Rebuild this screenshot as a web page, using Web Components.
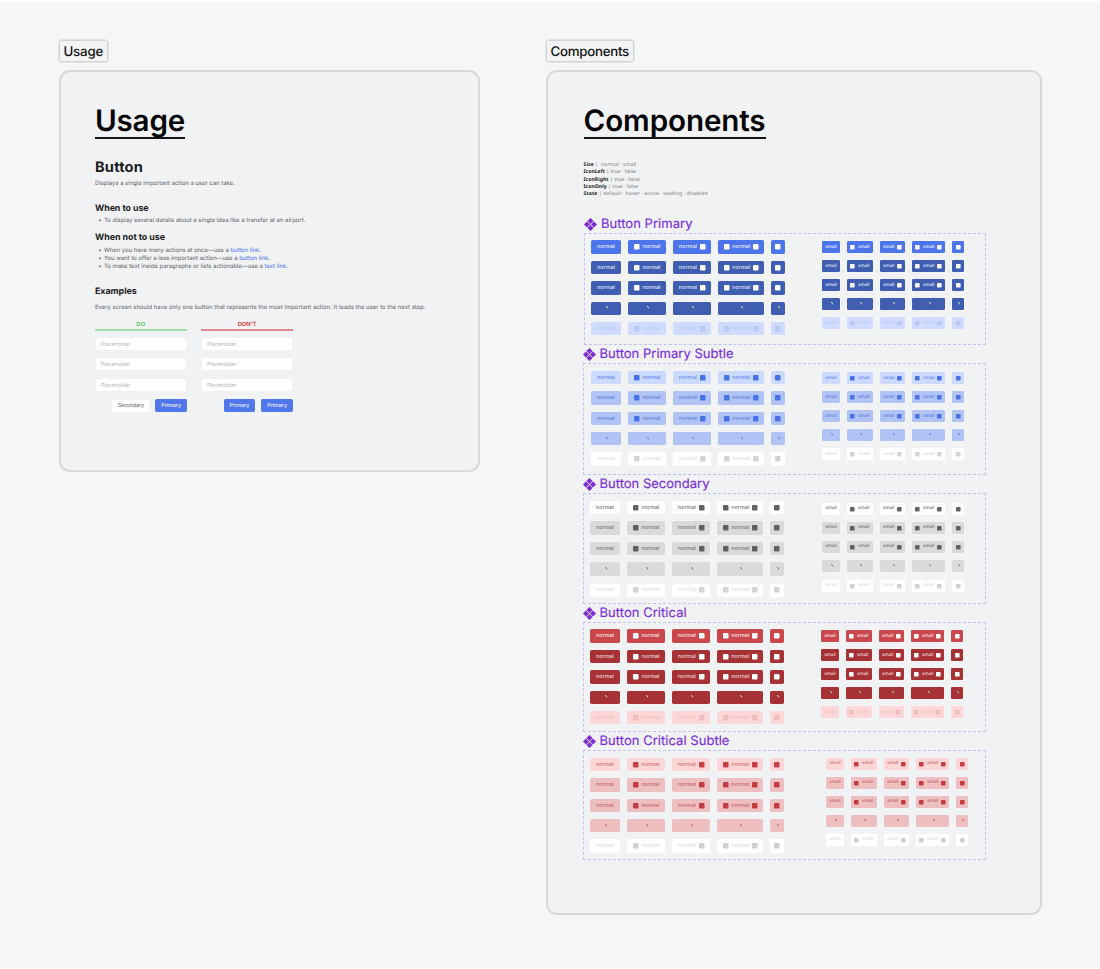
<!DOCTYPE html>
<html lang="en">
<head>
<meta charset="utf-8">
<title>Button – Usage and Components</title>
<style>
html,body{margin:0;height:100%}
body{font-family:Inter,"Liberation Sans",sans-serif;background:#f4f6f8;color:#111;text-rendering:geometricPrecision;font-optical-sizing:none;font-variation-settings:"opsz" 14}
</style>
</head>
<body>
<design-board></design-board>
<script>
// Text set to an exact width by spreading the difference over its letters.
class FitText extends HTMLElement{
  connectedCallback(){
    if(!this.shadowRoot)this.attachShadow({mode:'open'}).innerHTML='<style>:host{display:inline-block;white-space:pre}</style><slot></slot>';
    const w=parseFloat(this.getAttribute('w')),n=this.textContent.length;
    this.style.letterSpacing='0px';
    this.style.letterSpacing=((w-this.getBoundingClientRect().width)/n).toFixed(4)+'px';
  }
}

class BoardPanel extends HTMLElement{
  connectedCallback(){
    this.attachShadow({mode:'open'}).innerHTML=`<style>
    :host{display:block}
    .tag{box-sizing:border-box;display:inline-flex;align-items:center;height:22px;padding:2.5px 3.5px 0;border:1px solid #d0d2d5;outline:.5px solid #e3e4e7;border-radius:2.5px;background:#f1f3f5;font-size:13.3px;font-weight:500;line-height:20px;vertical-align:top}
    .box{box-sizing:border-box;margin-top:8px;height:var(--h);border:2px solid #d6d8db;border-radius:11px;background:#f1f2f4;padding:32px 0 0 var(--pl,34px)}
    h1{width:fit-content;margin:0;font-size:29.6px;font-weight:600;line-height:35px;height:33px;border-bottom:2px solid #151515;color:#050505}
    </style>
    <div class="tag"><fit-text w="${this.getAttribute('tw')}">${this.getAttribute('name')}</fit-text></div>
    <div class="box"><h1><fit-text w="${this.getAttribute('hw')}">${this.getAttribute('name')}</fit-text></h1><slot></slot></div>`;
  }
}

class ExampleForm extends HTMLElement{
  connectedCallback(){
    const bad=this.hasAttribute('bad');
    this.attachShadow({mode:'open'}).innerHTML=`<style>
    :host{display:block;width:92px}
    .h{height:8px;line-height:11px;font-size:5.8px;font-weight:700;text-align:center;color:${bad?'#d14a50':'#5fc76c'}}
    .l{height:2px;margin-top:1.5px;background:${bad?'#e08a8f':'#a3dfaa'}}
    .f{box-sizing:border-box;display:flex;align-items:center;height:12px;margin:0 1px 8.5px 1px;padding:1.6px 0 0 5px;background:#fff;border-radius:1.5px;font-size:5.5px;color:#b5b8bd;box-shadow:0 0 1px #e3e5e9}
    .fs{padding-top:7px}
    .b{display:flex;justify-content:flex-end;align-items:center;gap:6px;font-size:5.4px;font-weight:500}
    .b span{box-sizing:border-box;padding-top:1px;display:flex;align-items:center;justify-content:center;width:31.7px;height:13px;border-radius:1.7px;background:#4f76ea;color:#e9eefd}
    .b .s{width:37px;height:11.5px;background:#fff;color:#777}
    </style>
    <div class="h"><fit-text w="${bad?18.7:9.5}">${bad?"DON'T":'DO'}</fit-text></div><div class="l"></div>
    <div class="fs">${'<div class="f"><fit-text w="29.3">Placeholder</fit-text></div>'.repeat(3)}</div>
    <div class="b"><span class="${bad?'':'s'}"><fit-text w="${bad?19.8:26.3}">${bad?'Primary':'Secondary'}</fit-text></span><span><fit-text w="19.8">Primary</fit-text></span></div>`;
  }
}

class UsageDoc extends HTMLElement{
  connectedCallback(){
    this.attachShadow({mode:'open'}).innerHTML=`<style>
    :host{display:block}
    h2,h3,p,ul{margin:0;padding:0;list-style:none}
    h2{font-size:14.6px;line-height:18px;height:18px;margin-top:19px;font-weight:700;color:#1b1c1e}
    h3{font-size:8.9px;line-height:12.8px;height:11px;font-weight:700;color:#1b1c1e}
    p,li{font-size:5.9px;line-height:10.2px;height:8px;color:#5d6065}
    li{display:flex}
    li::before{content:"•";width:5.8px;padding-left:3.2px}
    a{color:#4470ee}
    .c{display:flex;gap:14px;margin-top:8.7px}
    </style>
    <h2><fit-text w="48">Button</fit-text></h2>
    <p style="margin-top:2.5px"><fit-text w="139.7">Displays a single important action a user can take.</fit-text></p>
    <h3 style="margin-top:16.8px"><fit-text w="53.6">When to use</fit-text></h3>
    <ul style="margin-top:2.2px"><li><fit-text w="201.3">To display several details about a single idea like a transfer at an airport.</fit-text></li></ul>
    <h3 style="margin-top:7.8px"><fit-text w="70">When not to use</fit-text></h3>
    <ul style="margin-top:2.6px">
      <li><fit-text w="157">When you have many actions at once—use a <a>button link</a>.</fit-text></li>
      <li><fit-text w="166">You want to offer a less important action—use a <a>button link</a>.</fit-text></li>
      <li><fit-text w="184">To make text inside paragraphs or lists actionable—use a <a>text link</a>.</fit-text></li>
    </ul>
    <h3 style="margin-top:16.4px"><fit-text w="41.7">Examples</fit-text></h3>
    <p style="margin-top:5.5px"><fit-text w="330.5">Every screen should have only one button that represents the most important action. It leads the user to the next step.</fit-text></p>
    <div class="c"><example-form></example-form><example-form bad></example-form></div>`;
  }
}

class PropList extends HTMLElement{
  connectedCallback(){
    const rows=[['Size','  normal · small',52.8],['IconLeft',' true · false',52.5],['IconRight',' true · false',56.3],['IconOnly',' true · false',54.5],['State',' default · hover · active · loading · disabled',124.3]];
    this.attachShadow({mode:'open'}).innerHTML=`<style>
    :host{display:block;margin-top:23.1px;height:34.9px;font-family:"Noto Sans","Open Sans",sans-serif}
    div{font-size:5.1px;line-height:7.3px;height:7.3px;color:#777}
    b{color:#222}
    </style>`+rows.map(([a,b,w])=>`<div><fit-text w="${w}"><b>${a}</b> |${b}</fit-text></div>`).join('');
  }
}

// One grid of five states by five icon arrangements.
class ButtonMatrix extends HTMLElement{
  connectedCallback(){
    const small=this.getAttribute('size')==='small',label=small?'small':'normal';
    const palette={
      primary:[['#4c75ec','#fff','#e8eefe'],['#3f5db1','#fff','#dfe6f8'],['#cfdbff','#b9c8f6','#bccbf8']],
      primarySubtle:[['#cddaff','#4672e6','#668aeb'],['#b1c3f4','#4672e6','#5f82dc'],['#fff','#d3d3d3','#dedede']],
      secondary:[['#fff','#626262','#777'],['#dadada','#606060','#777'],['#fff','#d3d3d3','#dedede']],
      critical:[['#ca484c','#fff','#fbe6e6'],['#a63236','#fff','#f0d5d6'],['#fdd7d7','#f2bcbd','#f3bfc0']],
      criticalSubtle:[['#fdd7d7','#c73f44','#d36f72'],['#eebfc1','#c33c41','#c8666a'],['#fff','#cfcfcf','#dcdcdc']]
    }[this.getAttribute('kind')];
    const widths=small?[18,25.3,25.3,32.5,12]:[30,38,38,46,13.3];
    const marks=['t','it','ti','iti','i'];
    const part={t:`<fit-text w="${small?11.4:18}">${label}</fit-text>`,i:'<svg class="i" viewBox="0 0 10 10"><rect width="10" height="10" rx="1.6"/></svg>'};
    const spin='<svg class="l" viewBox="0 0 6 6"><path d="M3 1.3A2.1 2.1 0 0 1 4.7 3.3"/></svg>';
    let cells='';
    [0,1,1,3,2].forEach((s,r)=>marks.forEach(m=>{
      const [bg,ic,tx]=palette[s===3?1:s];
      cells+=`<span class="r${r}" style="background:${bg};color:${tx};--ic:${ic}">${s===3?spin:[...m].map(c=>part[c]).join('')}</span>`;
    }));
    this.attachShadow({mode:'open'}).innerHTML=`<style>
    :host{display:grid;grid-template-columns:${widths.map(w=>w+'px').join(' ')};column-gap:${small?7.3:7.1}px;grid-auto-rows:${small?12:13.4}px;row-gap:7px;align-content:start}
    span{display:flex;align-items:center;justify-content:center;gap:${small?3:3.2}px;border-radius:${small?1.3:1.7}px;font-size:${small?4.6:5.4}px;font-weight:500;line-height:8px;box-shadow:0 0 1.5px rgba(255,255,255,.6)}
    fit-text{padding-top:${small?1.2:.5}px}
    svg{flex:none;overflow:visible}
    .i{width:${small?4.6:5.5}px;height:${small?4.6:5.5}px;fill:var(--ic)}
    .l{width:6px;height:6px;fill:none;stroke:var(--ic);stroke-width:.8}
    .r4{position:relative;top:var(--last,0px)}
    </style>${cells}`;
  }
}

class ComponentSet extends HTMLElement{
  connectedCallback(){
    this.attachShadow({mode:'open'}).innerHTML=`<style>
    :host{display:block}
    h2{display:flex;align-items:center;margin:0;height:18.5px;font-size:13px;font-weight:400;line-height:18px;color:#7a2fd8;-webkit-text-stroke:.15px #7a2fd8}
    svg{width:13px;height:13px;margin:0 3.8px 0 .2px;fill:#7a2bd6}
    .f{box-sizing:border-box;display:flex;align-items:flex-start;height:var(--fh);border:1px dashed #c4c0f3}
    .n{margin:var(--ny) 0 0 var(--nx)}
    .s{margin:var(--sy) 0 0 var(--sx)}
    </style>
    <h2><svg viewBox="0 0 13 13"><path d="M6.5.3 9.2 3 6.5 5.7 3.8 3zM10 3.8l2.7 2.7L10 9.2 7.3 6.5zM6.5 7.3 9.2 10l-2.7 2.7L3.8 10zM3 3.8l2.7 2.7L3 9.2.3 6.5z" stroke="#7a2bd6" stroke-width=".7" stroke-linejoin="round"/></svg><fit-text w="${this.getAttribute('w')}">${this.getAttribute('name')}</fit-text></h2>
    <div class="f"><button-matrix class="n" kind="${this.getAttribute('kind')}"></button-matrix><button-matrix class="s" size="small" kind="${this.getAttribute('kind')}"></button-matrix></div>`;
  }
}

class DesignBoard extends HTMLElement{
  connectedCallback(){
    this.attachShadow({mode:'open'}).innerHTML=`<style>
    :host{box-sizing:border-box;display:flex;gap:66px;align-items:flex-start;height:969px;padding:38px 58px 0 59px;border-top:2px solid #fdfdfe;border-bottom:1px solid #fdfdfe}
    .u{width:421px;--h:402px}
    .c{width:496px;--h:844.6px;--pl:35.5px}
    component-set{width:403.5px;margin-left:-1px}
    </style>
    <board-panel class="u" name="Usage" tw="39.5" hw="90"><usage-doc></usage-doc></board-panel>
    <board-panel class="c" name="Components" tw="78.5" hw="182"><prop-list></prop-list>
      <component-set name="Button Primary" kind="primary" w="91.5" style="margin:17.9px 0 0 .5px;width:402px;--fh:111.5px;--nx:6px;--ny:6px;--sx:37.3px;--sy:6.6px"></component-set>
      <component-set name="Button Primary Subtle" kind="primarySubtle" w="134" style="--fh:111.5px;--nx:7.5px;--ny:6.5px;--sx:37.3px;--sy:7.6px"></component-set>
      <component-set name="Button Secondary" kind="secondary" w="110" style="--fh:110.5px;--nx:6.5px;--ny:6.6px;--sx:38.3px;--sy:8.5px;--last:1px"></component-set>
      <component-set name="Button Critical" kind="critical" w="87.2" style="--fh:109.5px;--nx:6.5px;--ny:6px;--sx:37.3px;--sy:7px"></component-set>
      <component-set name="Button Critical Subtle" kind="criticalSubtle" w="130" style="--fh:110px;--nx:6.5px;--ny:6.5px;--sx:42.3px;--sy:6.5px"></component-set>
    </board-panel>`;
  }
}
customElements.define('fit-text',FitText);
customElements.define('board-panel',BoardPanel);
customElements.define('example-form',ExampleForm);
customElements.define('usage-doc',UsageDoc);
customElements.define('prop-list',PropList);
customElements.define('button-matrix',ButtonMatrix);
customElements.define('component-set',ComponentSet);
customElements.define('design-board',DesignBoard);
</script>
</body>
</html>
